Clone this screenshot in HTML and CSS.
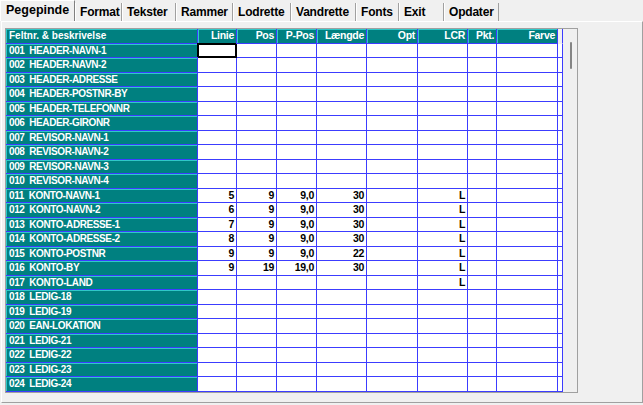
FILE: index.html
```html
<!DOCTYPE html>
<html>
<head>
<meta charset="utf-8">
<link rel="stylesheet" href="styles.css">
</head>
<body>
<div class="tabs">
  <div class="tab active">Pegepinde</div>
  <div class="tab t-format">Format</div>
  <div class="tab t-tekster">Tekster</div>
  <div class="tab t-rammer">Rammer</div>
  <div class="tab t-lodrette">Lodrette</div>
  <div class="tab t-vandrette">Vandrette</div>
  <div class="tab t-fonts">Fonts</div>
  <div class="tab t-exit">Exit</div>
  <div class="tab t-opdater">Opdater</div>
</div>
<div class="panel">
  <div class="frame">
    <div class="grid">
      <div class="row head">
        <div class="c c0">Feltnr. &amp; beskrivelse</div>
        <div class="c c1">Linie</div>
        <div class="c c2">Pos</div>
        <div class="c c3">P-Pos</div>
        <div class="c c4">Længde</div>
        <div class="c c5">Opt</div>
        <div class="c c6">LCR</div>
        <div class="c c7">Pkt.</div>
        <div class="c c8">Farve</div>
        <div class="c c9"></div>
      </div>
      <div class="row"><div class="c c0">001  HEADER-NAVN-1</div><div class="c c1 sel"></div><div class="c c2"></div><div class="c c3"></div><div class="c c4"></div><div class="c c5"></div><div class="c c6"></div><div class="c c7"></div><div class="c c8"></div><div class="c c9"></div></div>
      <div class="row"><div class="c c0">002  HEADER-NAVN-2</div><div class="c c1"></div><div class="c c2"></div><div class="c c3"></div><div class="c c4"></div><div class="c c5"></div><div class="c c6"></div><div class="c c7"></div><div class="c c8"></div><div class="c c9"></div></div>
      <div class="row"><div class="c c0">003  HEADER-ADRESSE</div><div class="c c1"></div><div class="c c2"></div><div class="c c3"></div><div class="c c4"></div><div class="c c5"></div><div class="c c6"></div><div class="c c7"></div><div class="c c8"></div><div class="c c9"></div></div>
      <div class="row"><div class="c c0">004  HEADER-POSTNR-BY</div><div class="c c1"></div><div class="c c2"></div><div class="c c3"></div><div class="c c4"></div><div class="c c5"></div><div class="c c6"></div><div class="c c7"></div><div class="c c8"></div><div class="c c9"></div></div>
      <div class="row"><div class="c c0">005  HEADER-TELEFONNR</div><div class="c c1"></div><div class="c c2"></div><div class="c c3"></div><div class="c c4"></div><div class="c c5"></div><div class="c c6"></div><div class="c c7"></div><div class="c c8"></div><div class="c c9"></div></div>
      <div class="row"><div class="c c0">006  HEADER-GIRONR</div><div class="c c1"></div><div class="c c2"></div><div class="c c3"></div><div class="c c4"></div><div class="c c5"></div><div class="c c6"></div><div class="c c7"></div><div class="c c8"></div><div class="c c9"></div></div>
      <div class="row"><div class="c c0">007  REVISOR-NAVN-1</div><div class="c c1"></div><div class="c c2"></div><div class="c c3"></div><div class="c c4"></div><div class="c c5"></div><div class="c c6"></div><div class="c c7"></div><div class="c c8"></div><div class="c c9"></div></div>
      <div class="row"><div class="c c0">008  REVISOR-NAVN-2</div><div class="c c1"></div><div class="c c2"></div><div class="c c3"></div><div class="c c4"></div><div class="c c5"></div><div class="c c6"></div><div class="c c7"></div><div class="c c8"></div><div class="c c9"></div></div>
      <div class="row"><div class="c c0">009  REVISOR-NAVN-3</div><div class="c c1"></div><div class="c c2"></div><div class="c c3"></div><div class="c c4"></div><div class="c c5"></div><div class="c c6"></div><div class="c c7"></div><div class="c c8"></div><div class="c c9"></div></div>
      <div class="row"><div class="c c0">010  REVISOR-NAVN-4</div><div class="c c1"></div><div class="c c2"></div><div class="c c3"></div><div class="c c4"></div><div class="c c5"></div><div class="c c6"></div><div class="c c7"></div><div class="c c8"></div><div class="c c9"></div></div>
      <div class="row"><div class="c c0">011  KONTO-NAVN-1</div><div class="c c1">5</div><div class="c c2">9</div><div class="c c3">9,0</div><div class="c c4">30</div><div class="c c5"></div><div class="c c6">L</div><div class="c c7"></div><div class="c c8"></div><div class="c c9"></div></div>
      <div class="row"><div class="c c0">012  KONTO-NAVN-2</div><div class="c c1">6</div><div class="c c2">9</div><div class="c c3">9,0</div><div class="c c4">30</div><div class="c c5"></div><div class="c c6">L</div><div class="c c7"></div><div class="c c8"></div><div class="c c9"></div></div>
      <div class="row"><div class="c c0">013  KONTO-ADRESSE-1</div><div class="c c1">7</div><div class="c c2">9</div><div class="c c3">9,0</div><div class="c c4">30</div><div class="c c5"></div><div class="c c6">L</div><div class="c c7"></div><div class="c c8"></div><div class="c c9"></div></div>
      <div class="row"><div class="c c0">014  KONTO-ADRESSE-2</div><div class="c c1">8</div><div class="c c2">9</div><div class="c c3">9,0</div><div class="c c4">30</div><div class="c c5"></div><div class="c c6">L</div><div class="c c7"></div><div class="c c8"></div><div class="c c9"></div></div>
      <div class="row"><div class="c c0">015  KONTO-POSTNR</div><div class="c c1">9</div><div class="c c2">9</div><div class="c c3">9,0</div><div class="c c4">22</div><div class="c c5"></div><div class="c c6">L</div><div class="c c7"></div><div class="c c8"></div><div class="c c9"></div></div>
      <div class="row"><div class="c c0">016  KONTO-BY</div><div class="c c1">9</div><div class="c c2">19</div><div class="c c3">19,0</div><div class="c c4">30</div><div class="c c5"></div><div class="c c6">L</div><div class="c c7"></div><div class="c c8"></div><div class="c c9"></div></div>
      <div class="row"><div class="c c0">017  KONTO-LAND</div><div class="c c1"></div><div class="c c2"></div><div class="c c3"></div><div class="c c4"></div><div class="c c5"></div><div class="c c6">L</div><div class="c c7"></div><div class="c c8"></div><div class="c c9"></div></div>
      <div class="row"><div class="c c0">018  LEDIG-18</div><div class="c c1"></div><div class="c c2"></div><div class="c c3"></div><div class="c c4"></div><div class="c c5"></div><div class="c c6"></div><div class="c c7"></div><div class="c c8"></div><div class="c c9"></div></div>
      <div class="row"><div class="c c0">019  LEDIG-19</div><div class="c c1"></div><div class="c c2"></div><div class="c c3"></div><div class="c c4"></div><div class="c c5"></div><div class="c c6"></div><div class="c c7"></div><div class="c c8"></div><div class="c c9"></div></div>
      <div class="row"><div class="c c0">020  EAN-LOKATION</div><div class="c c1"></div><div class="c c2"></div><div class="c c3"></div><div class="c c4"></div><div class="c c5"></div><div class="c c6"></div><div class="c c7"></div><div class="c c8"></div><div class="c c9"></div></div>
      <div class="row"><div class="c c0">021  LEDIG-21</div><div class="c c1"></div><div class="c c2"></div><div class="c c3"></div><div class="c c4"></div><div class="c c5"></div><div class="c c6"></div><div class="c c7"></div><div class="c c8"></div><div class="c c9"></div></div>
      <div class="row"><div class="c c0">022  LEDIG-22</div><div class="c c1"></div><div class="c c2"></div><div class="c c3"></div><div class="c c4"></div><div class="c c5"></div><div class="c c6"></div><div class="c c7"></div><div class="c c8"></div><div class="c c9"></div></div>
      <div class="row"><div class="c c0">023  LEDIG-23</div><div class="c c1"></div><div class="c c2"></div><div class="c c3"></div><div class="c c4"></div><div class="c c5"></div><div class="c c6"></div><div class="c c7"></div><div class="c c8"></div><div class="c c9"></div></div>
      <div class="row"><div class="c c0">024  LEDIG-24</div><div class="c c1"></div><div class="c c2"></div><div class="c c3"></div><div class="c c4"></div><div class="c c5"></div><div class="c c6"></div><div class="c c7"></div><div class="c c8"></div><div class="c c9"></div></div>
    </div>
    <div class="scroll"><div class="thumb"></div></div>
  </div>
</div>
</body>
</html>
```
FILE: styles.css
```css
html, body {
  margin: 0;
  padding: 0;
  background: #f0f0f0;
  font-family: "Liberation Sans", Arial, sans-serif;
  color: #000;
}

.tabs {
  display: flex;
  align-items: flex-end;
  height: 21px;
}

.tab {
  box-sizing: border-box;
  height: 18px;
  line-height: 18px;
  padding-left: 4px;
  font-size: 12px;
  font-weight: bold;
  letter-spacing: -0.2px;
  border-left: 1px solid #ffffff;
  border-right: 1px solid #a0a0a0;
  white-space: nowrap;
}

.tab.active {
  width: 75px;
  height: 21px;
  line-height: 19px;
  padding-left: 5px;
  font-size: 12.5px;
  letter-spacing: 0;
  border-top: 1px solid #ffffff;
  border-right: 1px solid #808080;
}

.t-format { width: 47px; }
.t-tekster { width: 54px; }
.t-rammer { width: 57px; }
.t-lodrette { width: 58px; }
.t-vandrette { width: 65px; }
.t-fonts { width: 43px; }
.t-exit { width: 45px; }
.t-opdater { width: 55px; }

.panel {
  box-sizing: border-box;
  margin-left: 1px;
  width: 642px;
  height: 382px;
  border-top: 1px solid #ffffff;
  border-left: 1px solid #ffffff;
  border-right: 1px solid #a0a0a0;
  border-bottom: 1px solid #a0a0a0;
  padding: 6px 0 0 3px;
}

.frame {
  box-sizing: border-box;
  width: 573px;
  height: 364.5px;
  border: 1px solid #a0a0a0;
  background: #f0f0f0;
  display: flex;
}

.grid {
  width: 557px;
  display: flex;
  flex-direction: column;
}

.row {
  display: flex;
  height: 14.5px;
  flex: none;
}

.c {
  box-sizing: border-box;
  height: 14.5px;
  line-height: 13.5px;
  border-right: 1px solid #3c3cff;
  border-bottom: 1px solid #3c3cff;
  background: #ffffff;
  font-size: 10.5px;
  font-weight: bold;
  letter-spacing: -0.3px;
  text-align: right;
  padding-right: 2px;
  white-space: pre;
  overflow: hidden;
}

.c0 {
  width: 192px;
  text-align: left;
  padding-left: 3px;
  padding-right: 0;
  font-size: 10px;
  letter-spacing: -0.4px;
  background: #008080;
  color: #ffffff;
  box-shadow: inset 1px 1px 0 #30c8c8;
}

.c1 { width: 39px; }
.c2 { width: 40px; }
.c3 { width: 40px; }
.c4 { width: 50px; }
.c5 { width: 51px; }
.c6 { width: 50px; }
.c7 { width: 29px; }
.c8 { width: 61px; }
.c9 { width: 5px; padding: 0; }

.head .c {
  background: #008080;
  color: #ffffff;
  box-shadow: inset 1px 1px 0 #30c8c8;
}

.head .c0 {
  letter-spacing: 0;
}

.head .c9 {
  background: #f0f0f0;
  box-shadow: none;
  border-bottom-color: #f0f0f0;
}

.sel {
  border-right-color: #000000;
  border-bottom-color: #000000;
  box-shadow: inset 1px 1px 0 #000000, inset -1px -1px 0 #000000, -1px -1px 0 #000000;
}

.scroll {
  width: 14px;
  padding-top: 13px;
  padding-left: 7px;
  box-sizing: border-box;
}

.thumb {
  width: 2px;
  height: 27px;
  background: #858585;
  border-radius: 1px;
}
```
